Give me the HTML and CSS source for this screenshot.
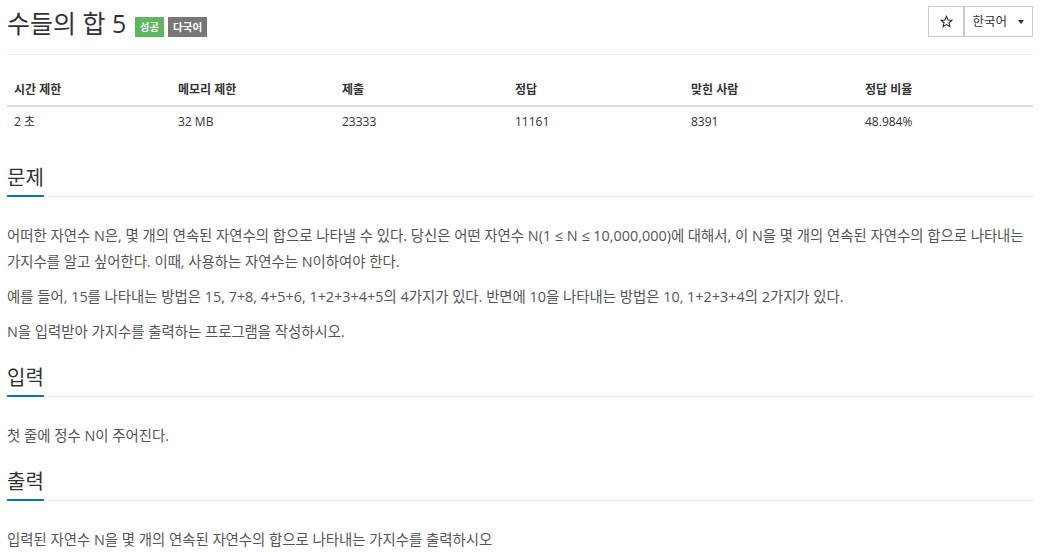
FILE: index.html
```html
<!DOCTYPE html>
<html lang="ko">
<head>
<meta charset="utf-8">
<title>수들의 합 5</title>
<link rel="stylesheet" href="styles.css">
</head>
<body>
<div class="page">
  <div class="page-header">
    <h1 class="title">수들의 합 5 <span class="label label-success">성공</span><span class="label label-default">다국어</span></h1>
    <div class="btn-group">
      <button class="btn btn-star" type="button" aria-label="즐겨찾기"><svg class="star" width="13" height="13" viewBox="0 0 24 24"><path d="M12 2.5l2.9 6.6 7.1.6-5.4 4.7 1.6 7-6.2-3.7-6.2 3.7 1.6-7L2 9.7l7.1-.6z" fill="none" stroke="#222" stroke-width="2" stroke-linejoin="miter"/></svg></button>
      <button class="btn btn-lang" type="button">한국어 <span class="caret"></span></button>
    </div>
  </div>

  <table class="info">
    <thead>
      <tr><th>시간 제한</th><th>메모리 제한</th><th>제출</th><th>정답</th><th>맞힌 사람</th><th>정답 비율</th></tr>
    </thead>
    <tbody>
      <tr><td>2 초</td><td>32 MB</td><td>23333</td><td>11161</td><td>8391</td><td>48.984%</td></tr>
    </tbody>
  </table>

  <section class="section">
    <div class="headline"><h2>문제</h2></div>
    <div class="text">
      <p>어떠한 자연수 N은, 몇 개의 연속된 자연수의 합으로 나타낼 수 있다. 당신은 어떤 자연수 N(1 ≤ N ≤ 10,000,000)에 대해서, 이 N을 몇 개의 연속된 자연수의 합으로 나타내는 가지수를 알고 싶어한다. 이때, 사용하는 자연수는 N이하여야 한다.</p>
      <p>예를 들어, 15를 나타내는 방법은 15, 7+8, 4+5+6, 1+2+3+4+5의 4가지가 있다. 반면에 10을 나타내는 방법은 10, 1+2+3+4의 2가지가 있다.</p>
      <p>N을 입력받아 가지수를 출력하는 프로그램을 작성하시오.</p>
    </div>
  </section>

  <section class="section">
    <div class="headline"><h2>입력</h2></div>
    <div class="text">
      <p>첫 줄에 정수 N이 주어진다.</p>
    </div>
  </section>

  <section class="section">
    <div class="headline"><h2>출력</h2></div>
    <div class="text">
      <p>입력된 자연수 N을 몇 개의 연속된 자연수의 합으로 나타내는 가지수를 출력하시오</p>
    </div>
  </section>
</div>
</body>
</html>
```

FILE: styles.css
```css
* { box-sizing: border-box; }
html, body { margin: 0; padding: 0; background: #fff; }
body {
  font-family: "Open Sans", "Noto Sans CJK KR", sans-serif;
  font-size: 14px;
  color: #555;
  line-height: 1.42857;
}
.page { padding: 0 20px 0 7px; }

.page-header {
  display: flex;
  justify-content: space-between;
  align-items: flex-start;
  border-bottom: 1px solid #eee;
  padding: 5px 0 13px;
}
.title {
  margin: 0;
  font-size: 25px;
  font-weight: 400;
  line-height: 36px;
  color: #333;
  display: flex;
  align-items: center;
  white-space: pre;
}
.label {
  display: inline-block;
  font-size: 10.5px;
  font-weight: 700;
  line-height: 10px;
  color: #fff;
  padding: 5px 5px;
  margin-top: 7px;
  margin-left: 4px;
}
.title .label-success { margin-left: 2px; }
.label-success { background: #5cb85c; }
.label-default { background: #777; }

.btn-group { display: flex; margin-top: 1px; }
.btn {
  font-family: inherit;
  font-size: 12.5px;
  color: #333;
  background: #fff;
  border: 1px solid #ccc;
  height: 31px;
  padding: 0 8px 0 7px;
  line-height: 29px;
  cursor: pointer;
  display: flex;
  align-items: center;
}
.btn-star { width: 36px; padding: 0; justify-content: center; }
.star { display: block; margin-top: -1px; }
.btn-lang { margin-left: -1px; border-left-width: 2px; }
.caret {
  display: inline-block;
  width: 0; height: 0;
  margin-left: 11px;
  margin-top: 1px;
  border-top: 4px solid #333;
  border-left: 3.5px solid transparent;
  border-right: 3.5px solid transparent;
}

.info {
  width: 100%;
  border-collapse: collapse;
  margin: 16px 0 27px;
  color: #333;
  font-size: 12px;
}
.info th, .info td { text-align: left; line-height: 17px; }
.info th { font-weight: 700; border-bottom: 2px solid #ddd; padding: 10px 7px 7px; }
.info td { padding: 6px 7px 8px; }
.info th:nth-child(1) { width: 164px; }
.info th:nth-child(2) { width: 164px; }
.info th:nth-child(3) { width: 173px; }
.info th:nth-child(4) { width: 176px; }
.info th:nth-child(5) { width: 174px; }

.headline {
  border-bottom: 1px dotted #d8d8d8;
  margin: 20px 0 26px;
  display: flex;
}
.headline h2 {
  margin: 0 0 -1px;
  font-size: 20px;
  font-weight: 400;
  line-height: 26px;
  color: #333;
  padding-bottom: 4px;
  border-bottom: 2px solid #0076c0;
}
.text { font-size: 14.4px; line-height: 26px; }
.text p { margin: 0 0 9px; }
```
